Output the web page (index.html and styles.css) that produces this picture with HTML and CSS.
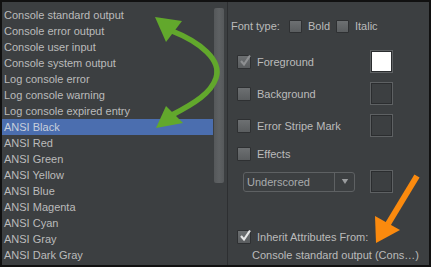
FILE: index.html
```html
<!DOCTYPE html>
<html>
<head>
<meta charset="utf-8">
<link rel="stylesheet" href="styles.css">
</head>
<body>
<div class="frame">
  <div class="left">
    <ul class="list">
      <li>Console standard output</li>
      <li>Console error output</li>
      <li>Console user input</li>
      <li>Console system output</li>
      <li>Log console error</li>
      <li>Log console warning</li>
      <li>Log console expired entry</li>
      <li class="sel">ANSI Black</li>
      <li>ANSI Red</li>
      <li>ANSI Green</li>
      <li>ANSI Yellow</li>
      <li>ANSI Blue</li>
      <li>ANSI Magenta</li>
      <li>ANSI Cyan</li>
      <li>ANSI Gray</li>
      <li>ANSI Dark Gray</li>
    </ul>
    <div class="scrollbar"><div class="thumb"></div></div>
  </div>
  <div class="sep"></div>
  <div class="right">
    <div class="fonttype">
      <span class="ft-label">Font type:</span>
      <span class="cb small"></span><span class="ft-opt">Bold</span>
      <span class="cb small"></span><span class="ft-opt">Italic</span>
    </div>
    <div class="row r-fg">
      <span class="cb checked dim"><svg viewBox="0 0 14 14"><path d="M3 7 L6 10.5 L12 1.5"/></svg></span>
      <span class="lbl">Foreground</span>
      <span class="swatch white"></span>
    </div>
    <div class="row r-bg">
      <span class="cb"></span>
      <span class="lbl">Background</span>
      <span class="swatch"></span>
    </div>
    <div class="row r-err">
      <span class="cb"></span>
      <span class="lbl">Error Stripe Mark</span>
      <span class="swatch"></span>
    </div>
    <div class="row r-eff short">
      <span class="cb"></span>
      <span class="lbl">Effects</span>
    </div>
    <div class="row r-combo">
      <div class="combo"><span class="combo-text">Underscored</span><span class="combo-btn"><svg viewBox="0 0 10 6"><path d="M1 0 H9 L5 6 Z"/></svg></span></div>
      <span class="swatch"></span>
    </div>
    <div class="row r-inh short">
      <span class="cb checked"><svg viewBox="0 0 14 14"><path d="M3 7 L6 10.5 L12 1.5"/></svg></span>
      <span class="lbl">Inherit Attributes From:</span>
    </div>
    <div class="inh-target">Console standard output (Cons…)</div>
  </div>
  <svg class="annot" width="431" height="267" viewBox="0 0 431 267">
    <path class="green" d="M172 31 C 200 42, 222 60, 216 78 C 211 93, 195 103, 172 115"/>
    <polygon class="gfill" points="155,17 182,21 166,42"/>
    <polygon class="gfill" points="156,128 166,106 183,123"/>
    <path class="orange" d="M417 176 L 388 224"/>
    <polygon class="ofill" points="376,243 375,216 400,230"/>
  </svg>
</div>
</body>
</html>
```
FILE: styles.css
```css
* { box-sizing: border-box; }
html, body { margin: 0; padding: 0; background: #000; }
body {
  font-family: "Liberation Sans", Arial, sans-serif;
  font-size: 11px;
  color: #bbbbbb;
}
.frame {
  position: relative;
  width: 431px;
  height: 267px;
  border: 2px solid #111;
  background: #3c3f41;
  display: flex;
  overflow: hidden;
}
.left {
  width: 224px;
  display: flex;
  flex: none;
}
.list {
  list-style: none;
  margin: 0;
  padding: 5px 0 0 0;
  width: 212px;
}
.list li {
  height: 16px;
  line-height: 16px;
  padding-left: 2px;
  white-space: nowrap;
}
.list li.sel {
  background: #4b6eaf;
  color: #c8d0dc;
  width: 211px;
}
.scrollbar {
  width: 10px;
  padding-top: 6px;
}
.thumb {
  height: 175px;
  border-radius: 2px;
  background: linear-gradient(90deg, #55585a, #5e6163 50%, #56595b);
}
.sep {
  width: 1px;
  margin-left: 1px;
  background: #2d2f31;
  flex: none;
}
.right {
  flex: 1;
  min-width: 0;
  padding: 16px 36px 0 9px;
  display: flex;
  flex-direction: column;
}
.fonttype {
  height: 16px;
  display: flex;
  align-items: center;
  margin-left: -6px;
}
.ft-label { width: 58px; }
.ft-opt { margin-left: 6px; width: 28px; }
.cb {
  width: 14px;
  height: 14px;
  flex: none;
  border: 1px solid #2e3032;
  border-radius: 1px;
  background: linear-gradient(#6d7072, #5a5d5f);
  position: relative;
}
.cb.small { width: 13px; height: 13px; }
.cb svg {
  position: absolute;
  left: 0; top: -2px;
  width: 14px; height: 14px;
  fill: none;
  stroke: #e6e6e6;
  stroke-width: 2.2;
}
.cb.dim svg { stroke: #8e9092; }
.row {
  display: flex;
  align-items: center;
  height: 23px;
  margin-top: 9px;
}
.row.r-fg { margin-top: 16px; }
.row.short { height: 16px; }
.r-eff { margin-top: 9px; }
.r-combo { margin-top: 8px; }
.r-inh { margin-top: 36px; }
.lbl { margin-left: 6px; white-space: nowrap; }
.swatch {
  margin-left: auto;
  width: 23px;
  height: 23px;
  flex: none;
  border: 1px solid #5e6163;
  box-shadow: inset 0 0 0 1px #2b2d2f;
  background: #3c3f41;
}
.swatch.white { background: #fff; }
.combo {
  margin-left: 6px;
  width: 112px;
  height: 20px;
  border: 1px solid #5e6163;
  border-radius: 3px;
  display: flex;
  align-items: center;
  color: #a9abad;
}
.combo-text { flex: 1; padding-left: 3px; }
.combo-btn {
  width: 20px;
  height: 18px;
  border-left: 1px solid #5e6163;
  display: flex;
  align-items: center;
  justify-content: center;
}
.combo-btn svg { width: 8px; height: 5px; fill: #9a9c9e; }
.inh-target {
  margin-top: 2px;
  margin-left: 15px;
  height: 16px;
  line-height: 16px;
  white-space: nowrap;
}
.annot {
  position: absolute;
  left: -2px;
  top: -2px;
  pointer-events: none;
}
.green { fill: none; stroke: #62a82c; stroke-width: 5.5; }
.gfill { fill: #62a82c; }
.orange { fill: none; stroke: #fb8a0e; stroke-width: 6; }
.ofill { fill: #fb8a0e; }
```
